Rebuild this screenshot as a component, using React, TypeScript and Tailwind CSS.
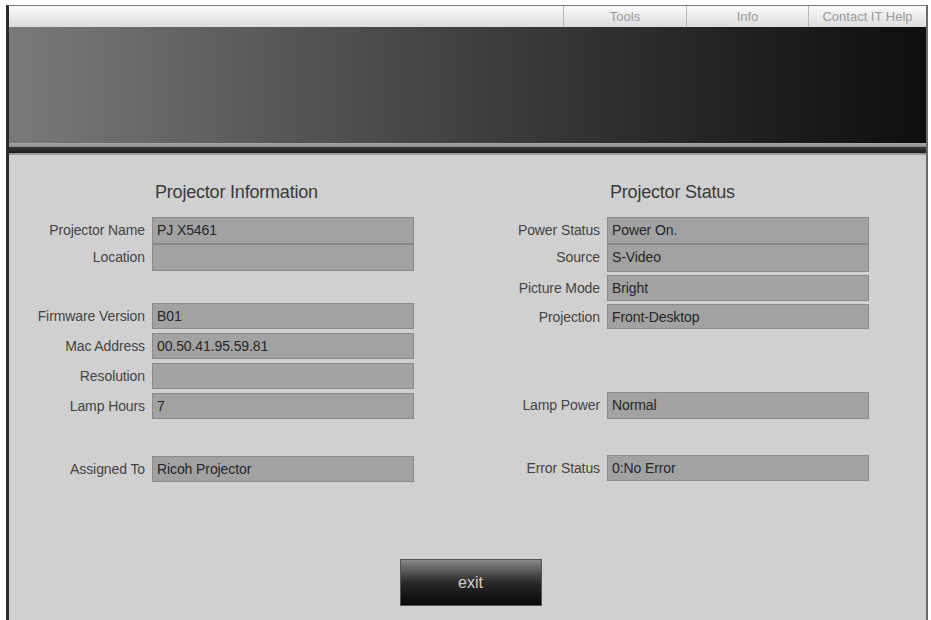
import React from "react";

interface Row {
  label: string;
  value: string;
  mt: string;
  h: string;
}

const info: Row[] = [
  { label: "Projector Name", value: "PJ X5461", mt: "mt-0", h: "h-[27px]" },
  { label: "Location", value: "", mt: "mt-0", h: "h-[27px]" },
  { label: "Firmware Version", value: "B01", mt: "mt-[32px]", h: "h-[26px]" },
  { label: "Mac Address", value: "00.50.41.95.59.81", mt: "mt-[4px]", h: "h-[26px]" },
  { label: "Resolution", value: "", mt: "mt-[4px]", h: "h-[26px]" },
  { label: "Lamp Hours", value: "7", mt: "mt-[4px]", h: "h-[26px]" },
  { label: "Assigned To", value: "Ricoh Projector", mt: "mt-[37px]", h: "h-[26px]" },
];

const status: Row[] = [
  { label: "Power Status", value: "Power On.", mt: "mt-0", h: "h-[27px]" },
  { label: "Source", value: "S-Video", mt: "mt-0", h: "h-[28px]" },
  { label: "Picture Mode", value: "Bright", mt: "mt-[3px]", h: "h-[26px]" },
  { label: "Projection", value: "Front-Desktop", mt: "mt-[3px]", h: "h-[25px]" },
  { label: "Lamp Power", value: "Normal", mt: "mt-[63px]", h: "h-[27px]" },
  { label: "Error Status", value: "0:No Error", mt: "mt-[36px]", h: "h-[26px]" },
];

function Field({ row }: { row: Row }) {
  return (
    <div className={`flex items-start gap-[7px] ${row.mt}`}>
      <div className="w-[136px] whitespace-nowrap pt-[5px] text-right text-[14px] leading-[16px] tracking-[-0.1px] text-[#444]">
        {row.label}
      </div>
      <div
        className={`w-[262px] ${row.h} whitespace-nowrap border border-[#8a8a8a] bg-[#a2a2a2] px-[4px] pt-[4px] text-[14px] leading-[16px] tracking-[-0.1px] text-[#262626]`}
      >
        {row.value}
      </div>
    </div>
  );
}

function Column({ title, rows }: { title: string; rows: Row[] }) {
  return (
    <div className="flex w-[405px] flex-col">
      <div className="ml-[146px] h-[46px] pt-[10px] text-[18px] leading-[22px] tracking-[-0.2px] text-[#3a3a3a]">
        {title}
      </div>
      {rows.map((r) => (
        <Field key={r.label} row={r} />
      ))}
    </div>
  );
}

export default function App() {
  return (
    <div className="h-[620px] w-[931px] overflow-hidden bg-white pl-[6px] pt-[5px] font-['Liberation_Sans',Arial,sans-serif]">
      <div className="flex h-[620px] w-[922px] flex-col border-l-[3px] border-r-[2px] border-t border-l-[#2a2a2a] border-r-[#6a6a6a] border-t-[#7a7a7a] bg-[#d0d0d0]">
        {/* top nav */}
        <div className="flex h-[21px] justify-end bg-gradient-to-b from-[#fbfbfb] to-[#dcdcdc] text-[13px] text-[#9a9a9a]">
          <div className="flex w-[123px] items-center justify-center border-l border-[#b8b8b8]">Tools</div>
          <div className="flex w-[122px] items-center justify-center border-l border-[#b8b8b8]">Info</div>
          <div className="flex w-[118px] items-center justify-center border-l border-[#b8b8b8]">Contact IT Help</div>
        </div>
        {/* banner */}
        <div className="h-[116px] bg-gradient-to-r from-[#7a7a7a] via-[#404040] to-[#0e0e0e]" />
        <div className="h-[4px] bg-gradient-to-b from-[#a8a8a8] to-[#8a8a8a]" />
        <div className="h-[6px] bg-gradient-to-b from-[#3a3a3a] to-[#1c1c1c]" />
        <div className="h-[2px] bg-[#9a9a9a]" />
        {/* content */}
        <div className="flex flex-1 flex-col pt-[16px]">
          <div className="flex gap-[50px]">
            <Column title="Projector Information" rows={info} />
            <Column title="Projector Status" rows={status} />
          </div>
          <div className="mt-[77px] flex justify-center pl-[6px]">
            <button className="flex h-[47px] w-[142px] items-center justify-center border border-[#555] bg-gradient-to-b from-[#8a8a8a] via-[#2a2a2a] to-[#080808] text-[16px] text-[#d0d0d0]">
              exit
            </button>
          </div>
        </div>
      </div>
    </div>
  );
}
